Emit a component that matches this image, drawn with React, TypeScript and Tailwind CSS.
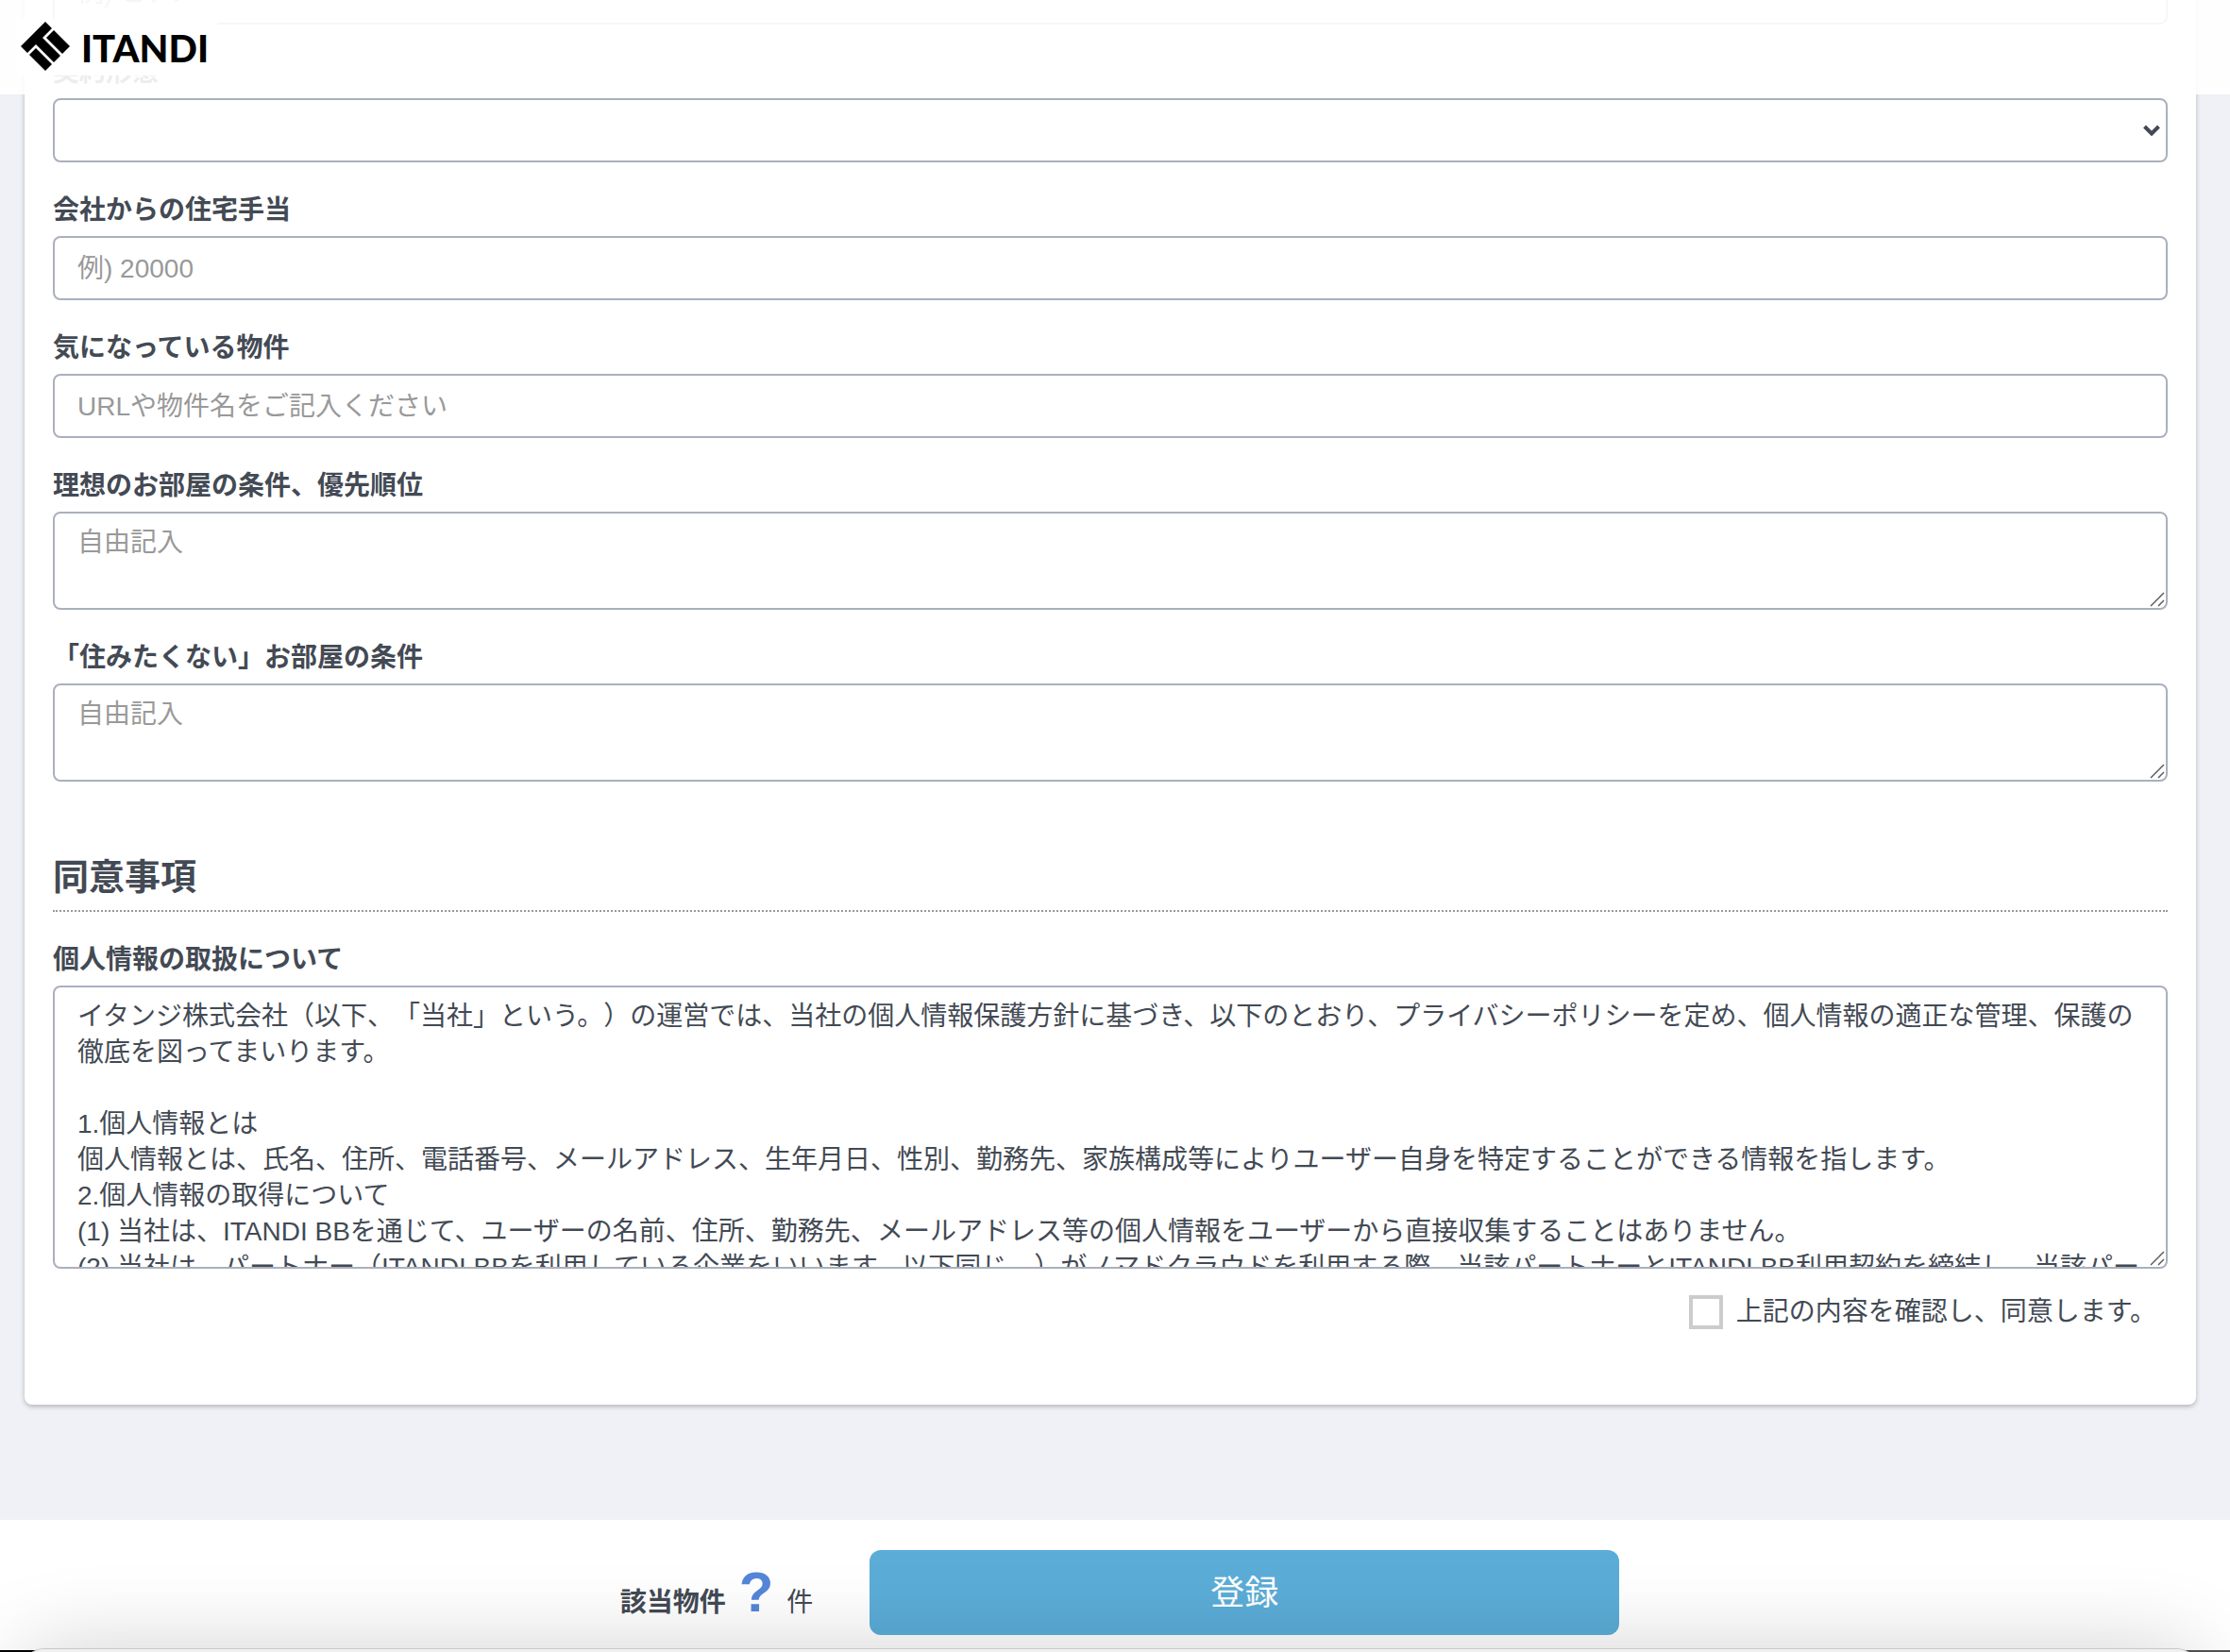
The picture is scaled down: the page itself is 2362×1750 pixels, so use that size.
import React from "react";

const fieldClass =
  "block w-full rounded-lg border-2 border-[#aab0bd] bg-white px-6 text-[28px] leading-[38px] text-[#434a54] placeholder:text-[#999] outline-none";

const policy = `イタンジ株式会社（以下、「当社」という。）の運営では、当社の個人情報保護方針に基づき、以下のとおり、プライバシーポリシーを定め、個人情報の適正な管理、保護の徹底を図ってまいります。

1.個人情報とは
個人情報とは、氏名、住所、電話番号、メールアドレス、生年月日、性別、勤務先、家族構成等によりユーザー自身を特定することができる情報を指します。
2.個人情報の取得について
(1) 当社は、ITANDI BBを通じて、ユーザーの名前、住所、勤務先、メールアドレス等の個人情報をユーザーから直接収集することはありません。
(2) 当社は、パートナー（ITANDI BBを利用している企業をいいます。以下同じ。）がノマドクラウドを利用する際、当該パートナーとITANDI BB利用契約を締結し、当該パートナーから個人情報を取得します。`;

function Label({ id, children }: { id: string; children: React.ReactNode }) {
  return (
    <label htmlFor={id} className="mt-[30px] mb-1.5 block text-[28px] leading-[42px] font-bold">
      {children}
    </label>
  );
}

function TextField({ id, placeholder }: { id: string; placeholder: string }) {
  return <input id={id} type="text" placeholder={placeholder} className={`${fieldClass} h-[68px] pt-0.5`} />;
}

function TextArea({
  id,
  size,
  ...rest
}: { id: string; size: string } & React.TextareaHTMLAttributes<HTMLTextAreaElement>) {
  return (
    <div className="relative">
      <textarea id={id} {...rest} className={`${fieldClass} ${size} resize-none overflow-hidden py-3`} />
      <svg viewBox="0 0 16 16" className="pointer-events-none absolute right-[3px] bottom-[3px] size-4">
        <path d="M1 15L15 1M9 15L15 9" fill="none" stroke="#555" strokeWidth="1.4" />
      </svg>
    </div>
  );
}

function Logo() {
  return (
    <span className="flex h-[60px] w-[214px] items-center bg-white text-black">
      <svg viewBox="0 0 64 60" className="h-[60px] w-16" aria-hidden="true">
        <path d="M32 3 L39 10 L29 20 L48 39 L41 46 L22 27 L13 36 L6 29 Z" />
        <path d="M41 12 L58 29 L50 37 L33 20 Z" />
        <path d="M22 31 L39 48 L32 55 L15 38 Z" />
      </svg>
      <span className="pt-0.5 pl-1.5 font-['Lato',sans-serif] text-[40px] leading-10 font-black">ITANDI</span>
    </span>
  );
}

export default function App() {
  return (
    <div className="min-h-screen overflow-hidden bg-[#f0f1f6] font-['Liberation_Sans','Noto_Sans_CJK_JP',sans-serif] text-[#434a54] [text-spacing-trim:space-all]">
      <header className="fixed inset-x-0 top-0 z-10 flex h-[100px] items-center bg-white/90 px-4">
        <a href="#top">
          <Logo />
        </a>
      </header>

      <main className="-mt-[42px] pr-9 pb-[262px] pl-[26px]">
        <form id="request" className="rounded-lg bg-white px-[30px] pb-20 shadow-[0_2px_5px_rgba(0,0,0,0.26)]">
          <TextField id="instrument" placeholder="例) ピアノ" />
          <Label id="contract">契約形態</Label>
          <div className="relative">
            <select id="contract" className={`${fieldClass} h-[68px] appearance-none`} defaultValue="">
              <option value=""></option>
            </select>
            <svg viewBox="0 0 18 12" className="pointer-events-none absolute top-7 right-2 h-3 w-[18px]">
              <path d="M1.5 2L9 9.5L16.5 2" fill="none" stroke="#434a54" strokeWidth="4" />
            </svg>
          </div>
          <Label id="allowance">会社からの住宅手当</Label>
          <TextField id="allowance" placeholder="例) 20000" />
          <Label id="property">気になっている物件</Label>
          <TextField id="property" placeholder="URLや物件名をご記入ください" />
          <Label id="ideal">理想のお部屋の条件、優先順位</Label>
          <TextArea id="ideal" size="h-[104px]" placeholder="自由記入" />
          <Label id="avoid">「住みたくない」お部屋の条件</Label>
          <TextArea id="avoid" size="h-[104px]" placeholder="自由記入" />

          <h2 className="mt-[72px] border-b-2 border-dotted border-[#999] pb-1.5 text-[38px] leading-[58px] font-bold">
            同意事項
          </h2>
          <Label id="policy">個人情報の取扱について</Label>
          <TextArea id="policy" size="h-[300px]" readOnly defaultValue={policy} />
          <label className="mt-7 flex items-center justify-end gap-3.5 pr-3">
            <input type="checkbox" className="size-9 appearance-none border-4 border-[#ccc] bg-white checked:bg-[#5badd6]" />
            <span className="text-[28px] leading-9">上記の内容を確認し、同意します。</span>
          </label>
        </form>
      </main>

      <footer className="fixed inset-x-0 bottom-0 flex h-[140px] items-start justify-center gap-[60px] bg-white pt-8 pl-2.5">
        <p className="flex items-baseline text-[28px]">
          <b>該当物件</b>
          <b className="mx-3.5 text-[60px] text-[#5586d9]">?</b>
          <span>件</span>
        </p>
        <button type="submit" form="request" className="h-[90px] w-[794px] rounded-xl bg-[#5badd8] pt-0.5 text-[36px] text-white">
          登録
        </button>
      </footer>

      <div className="fixed inset-x-0 bottom-0 h-0.5 bg-gradient-to-r from-black to-[#555]" />
      <div className="fixed right-9 -bottom-[596px] left-[26px] h-[600px] rounded-[20px] border-t border-[#c8c8c8] bg-[#f0f0f0] shadow-[0_0_90px_rgba(0,0,0,0.18)]" />
    </div>
  );
}
